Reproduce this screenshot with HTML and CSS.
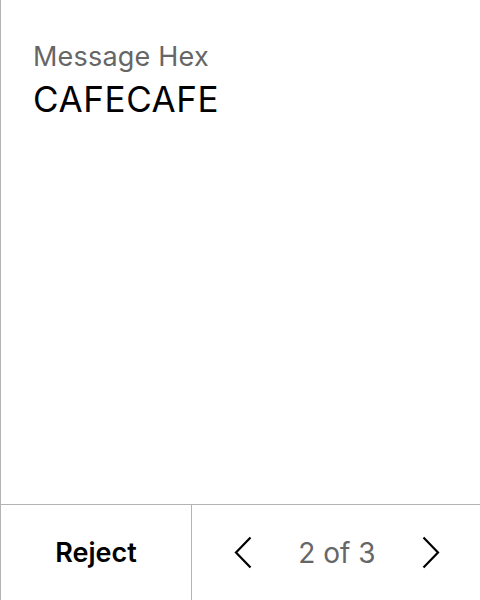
FILE: index.html
```html
<!DOCTYPE html>
<html>
<head>
<meta charset="utf-8">
<link rel="stylesheet" href="styles.css">
</head>
<body>
<div class="screen">
  <main class="content">
    <div class="label">Message Hex</div>
    <div class="value">CAFECAFE</div>
  </main>
  <footer class="footer">
    <button class="reject">Reject</button>
    <div class="pager">
      <button class="arrow" aria-label="Previous">
        <svg width="18" height="33" viewBox="0 0 18 33"><path d="M16.5 1.5 L2 16.5 L16.5 31.5" fill="none" stroke="#000" stroke-width="2.2"/></svg>
      </button>
      <span class="count">2 of 3</span>
      <button class="arrow" aria-label="Next">
        <svg width="18" height="33" viewBox="0 0 18 33"><path d="M1.5 1.5 L16 16.5 L1.5 31.5" fill="none" stroke="#000" stroke-width="2.2"/></svg>
      </button>
    </div>
  </footer>
</div>
</body>
</html>
```
FILE: styles.css
```css
html, body {
  margin: 0;
  padding: 0;
  background: #fff;
}
.screen {
  width: 480px;
  height: 600px;
  box-sizing: border-box;
  border-left: 1px solid #b3b3b3;
  display: flex;
  flex-direction: column;
  font-family: Inter, "Noto Sans", sans-serif;
}
.content {
  flex: 1;
  padding: 36px 32px 0 32px;
}
.label {
  font-size: 27px;
  line-height: 42px;
  letter-spacing: 0.2px;
  color: #666;
}
.value {
  font-size: 35px;
  line-height: 42px;
  letter-spacing: 0.6px;
  color: #000;
}
.footer {
  height: 96px;
  box-sizing: border-box;
  border-top: 1px solid #b3b3b3;
  display: flex;
}
.reject {
  width: 191px;
  border: none;
  border-right: 1px solid #b3b3b3;
  background: none;
  font-family: inherit;
  font-size: 27px;
  font-weight: 600;
  color: #000;
  padding: 0;
}
.pager {
  flex: 1;
  display: flex;
  align-items: center;
  padding-left: 42px;
}
.arrow {
  border: none;
  background: none;
  padding: 0;
  display: flex;
}
.count {
  font-size: 28px;
  color: #666;
  width: 170px;
  text-align: center;
}
```
